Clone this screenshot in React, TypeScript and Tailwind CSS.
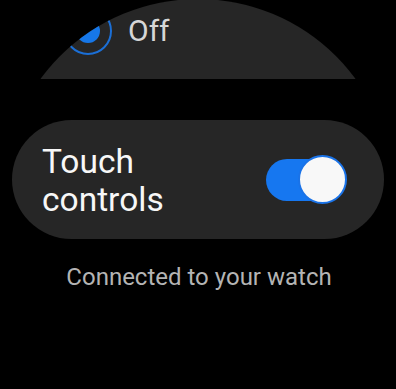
import React from "react";

export default function App() {
  const font = { fontFamily: "Roboto, 'Noto Sans', sans-serif" };
  return (
    <div
      className="w-[396px] h-[389px] bg-black overflow-hidden flex flex-col"
      style={font}
    >
      {/* Top clipped item */}
      <div className="h-[79px] w-[396px] bg-[#262626] [clip-path:circle(195px_at_198px_194px)]">
        <div className="h-[62px] flex items-center pl-[64px] gap-[16px]">
          <div className="w-[48px] h-[48px] rounded-full border-2 border-[#1b6fd6] flex items-center justify-center">
            <div className="w-[24px] h-[24px] rounded-full bg-[#1677e8]" />
          </div>
          <span className="text-[30px] leading-[36px] text-[#d6d6d6]">Off</span>
        </div>
      </div>

      {/* Touch controls card */}
      <div className="mt-[41px] mx-[12px] h-[119px] rounded-full bg-[#262626] flex items-center justify-between pl-[30px] pr-[37px]">
        <div className="text-[33.5px] leading-[38px] text-[#f7f7f7] pt-[2px]">
          Touch
          <br />
          controls
        </div>
        <div className="relative w-[81px] h-[49px]">
          <div className="absolute left-0 top-[4px] w-[74px] h-[42px] rounded-full bg-[#1677f0]" />
          <div className="absolute right-0 top-0 w-[49px] h-[49px] rounded-full bg-[#f8f8f8] border-2 border-[#1a73e8]" />
        </div>
      </div>

      <div className="mt-[23px] text-center text-[24px] leading-[30px] text-[#b4b4b4] pl-[2px]">
        Connected to your watch
      </div>
    </div>
  );
}
